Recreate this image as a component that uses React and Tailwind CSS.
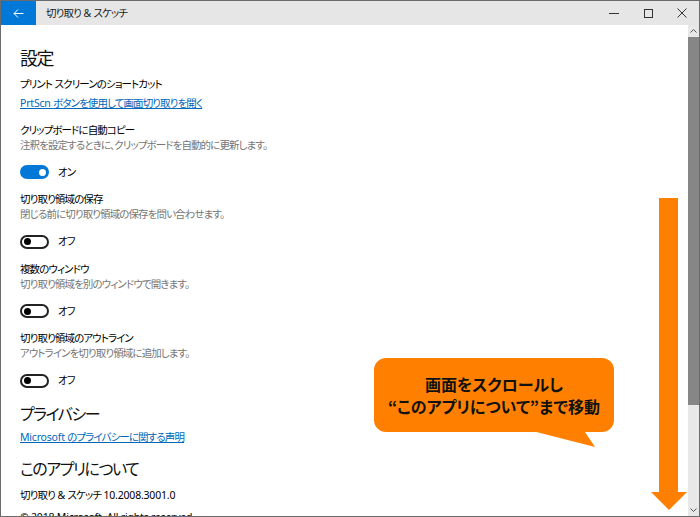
import React from "react";

const F = "font-['Noto_Sans','Noto_Sans_CJK_JP',sans-serif] [font-feature-settings:'palt']";
const T = "text-[10.5px] leading-[15px] tracking-[-0.9px]";

function L({ children }) {
  return <span className="tracking-[-0.2px]">{children}</span>;
}

function ToggleOn() {
  return (
    <div className="flex items-center h-[14px]">
      <div className="w-[29px] h-[14px] rounded-full bg-[#0078d7] flex items-center justify-end pr-[3px]">
        <div className="w-[7px] h-[7px] rounded-full bg-white" />
      </div>
      <span className={`ml-[9px] ${T} text-black`}>オン</span>
    </div>
  );
}

function ToggleOff() {
  return (
    <div className="flex items-center h-[14px]">
      <div className="w-[29px] h-[14px] rounded-full border-2 border-[#222] bg-white flex items-center pl-[2px]">
        <div className="w-[7px] h-[7px] rounded-full bg-black" />
      </div>
      <span className={`ml-[9px] ${T} text-black`}>オフ</span>
    </div>
  );
}

function Setting({ label, desc, on }) {
  return (
    <div className="mt-[13px]">
      <div className={`${T} text-black`}>{label}</div>
      <div className={`${T} text-[#767676]`}>{desc}</div>
      <div className="mt-[12.5px]">{on ? <ToggleOn /> : <ToggleOff />}</div>
    </div>
  );
}

export default function App() {
  return (
    <div className={`w-[700px] h-[517px] border border-[#6b6b6b] bg-white flex flex-col relative overflow-hidden ${F}`}>
      {/* Title bar */}
      <div className="h-[24px] flex items-center bg-[#e6e6e6] shrink-0">
        <div className="w-[35px] h-full bg-[#0078d7] flex items-center justify-center">
          <svg width="11" height="9" viewBox="0 0 11 9" fill="none" stroke="white" strokeWidth="1">
            <path d="M10.5 4.5H1M5 0.5L1 4.5L5 8.5" />
          </svg>
        </div>
        <div className={`ml-[10px] ${T} text-[#222]`}>切り取り<L> &amp; </L>スケッチ</div>
        <div className="ml-auto flex h-full">
          <div className="w-[34px] h-full flex items-center justify-center">
            <div className="w-[10px] h-px bg-[#333]" />
          </div>
          <div className="w-[34px] h-full flex items-center justify-center">
            <div className="w-[9px] h-[9px] border border-[#333]" />
          </div>
          <div className="w-[34px] h-full flex items-center justify-center">
            <svg width="10" height="10" viewBox="0 0 10 10" stroke="#333" strokeWidth="1">
              <path d="M0.5 0.5L9.5 9.5M9.5 0.5L0.5 9.5" />
            </svg>
          </div>
        </div>
      </div>

      {/* Body */}
      <div className="flex-1 flex min-h-0">
        <div className="flex-1 pl-[19px] pt-[21px] overflow-hidden">
          <div className="text-[18px] leading-[24px] tracking-[-1.5px] text-[#111]">設定</div>
          <div className={`mt-[7px] ${T} text-black`}>プリント<L> </L>スクリーンのショートカット</div>
          <div className={`mt-[4px] ${T} text-[#0067b8] underline`}><L>PrtScn </L>ボタンを使用して画面切り取りを開く</div>
          <div className={`mt-[12px] ${T} text-black`}>クリップボードに自動コピー</div>
          <div className={`${T} text-[#767676]`}>注釈を設定するときに、クリップボードを自動的に更新します。</div>
          <div className="mt-[12px]"><ToggleOn /></div>
          <Setting label="切り取り領域の保存" desc="閉じる前に切り取り領域の保存を問い合わせます。" />
          <Setting label="複数のウィンドウ" desc="切り取り領域を別のウィンドウで開きます。" />
          <Setting label="切り取り領域のアウトライン" desc="アウトラインを切り取り領域に追加します。" />
          <div className="mt-[15px] text-[16px] leading-[22px] tracking-[-1.5px] text-[#111]">プライバシー</div>
          <div className={`mt-[5px] ${T} text-[#0067b8] underline`}><L>Microsoft </L>のプライバシーに関する声明</div>
          <div className="mt-[13px] text-[16px] leading-[22px] tracking-[-1.5px] text-[#111]">このアプリについて</div>
          <div className={`mt-[8px] ${T} text-black`}>切り取り<L> &amp; </L>スケッチ<L> 10.2008.3001.0</L></div>
          <div className={`mt-[7px] ${T} text-black`}><L>© 2018 Microsoft. All rights reserved.</L></div>
        </div>
        {/* Scrollbar */}
        <div className="w-[11px] flex flex-col bg-[#e8e8e8]">
          <div className="h-[12px] flex items-center justify-center">
            <svg width="7" height="4" viewBox="0 0 7 4" fill="none" stroke="#555" strokeWidth="1">
              <path d="M0.5 3.5L3.5 0.5L6.5 3.5" />
            </svg>
          </div>
          <div className="h-[368px] bg-[#868686]" />
          <div className="flex-1" />
          <div className="h-[12px] flex items-center justify-center">
            <svg width="7" height="4" viewBox="0 0 7 4" fill="none" stroke="#555" strokeWidth="1">
              <path d="M0.5 0.5L3.5 3.5L6.5 0.5" />
            </svg>
          </div>
        </div>
      </div>

      {/* Callout */}
      <div className="absolute left-[373px] top-[357px] w-[240px] h-[74px] rounded-[12px] bg-[#ff8000] flex flex-col items-center justify-center">
        <div className="text-[16px] leading-[22px] font-bold text-[#111] font-['Noto_Sans_CJK_JP',sans-serif]">画面をスクロールし</div>
        <div className="text-[16px] leading-[22px] font-bold text-[#111] font-['Noto_Sans_CJK_JP',sans-serif]">“このアプリについて”まで移動</div>
      </div>
      <svg className="absolute left-[500px] top-[425px]" width="100" height="25" viewBox="0 0 100 25">
        <path d="M12 0 L80 0 L94 21 Z" fill="#ff8000" />
      </svg>

      {/* Arrow */}
      <svg className="absolute left-[649px] top-[197px]" width="38" height="314" viewBox="0 0 38 314">
        <path d="M9 0 H28 V294 H37 L19 312 L1 294 H9 Z" fill="#ff8000" />
      </svg>
    </div>
  );
}
